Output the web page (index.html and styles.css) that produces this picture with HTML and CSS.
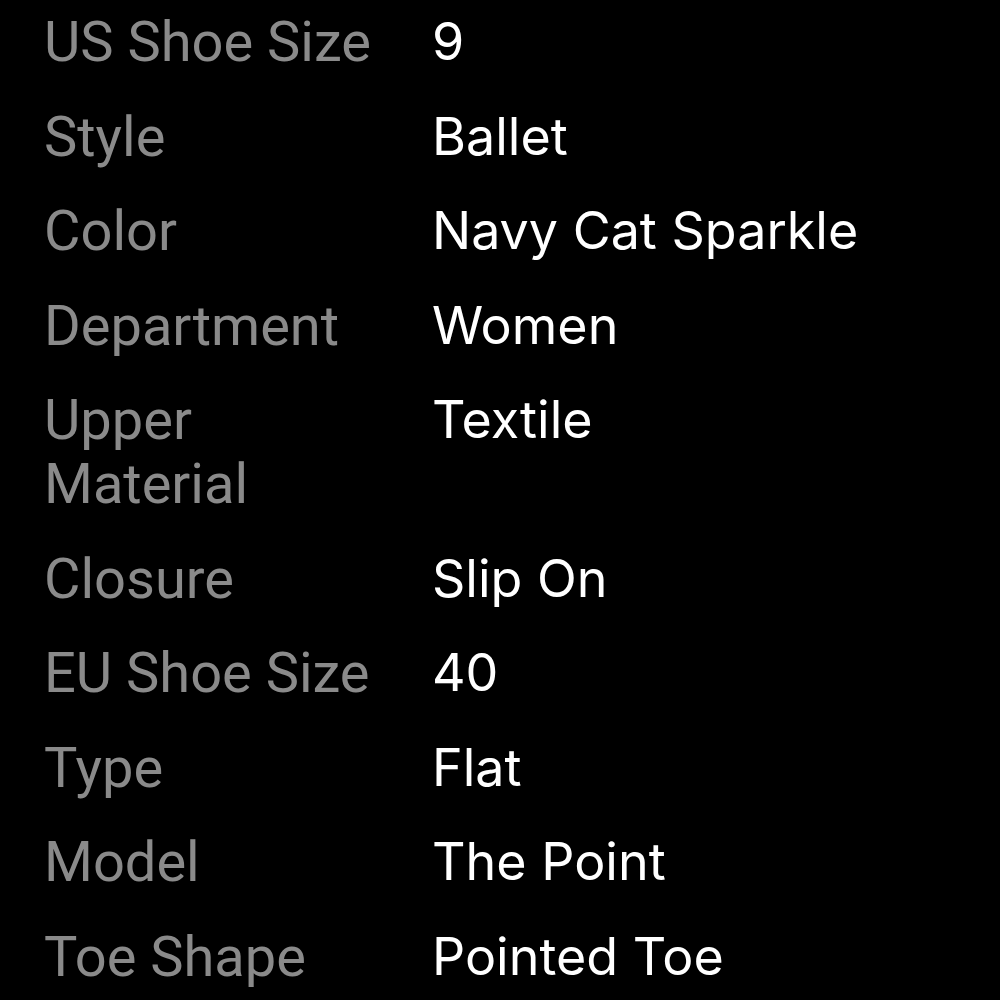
FILE: index.html
```html
<!DOCTYPE html>
<html lang="en">
<head>
    <meta charset="UTF-8">
    <title>Item specifics</title>
    <link rel="stylesheet" href="styles.css">
</head>
<body>
    <div class="specs">
        <div class="row"><div class="label">US Shoe Size</div><div class="value">9</div></div>
        <div class="row"><div class="label">Style</div><div class="value">Ballet</div></div>
        <div class="row"><div class="label">Color</div><div class="value">Navy Cat Sparkle</div></div>
        <div class="row"><div class="label">Department</div><div class="value">Women</div></div>
        <div class="row"><div class="label">Upper Material</div><div class="value">Textile</div></div>
        <div class="row"><div class="label">Closure</div><div class="value">Slip On</div></div>
        <div class="row"><div class="label">EU Shoe Size</div><div class="value">40</div></div>
        <div class="row"><div class="label">Type</div><div class="value">Flat</div></div>
        <div class="row"><div class="label">Model</div><div class="value">The Point</div></div>
        <div class="row"><div class="label">Toe Shape</div><div class="value">Pointed Toe</div></div>
    </div>
</body>
</html>
```

FILE: styles.css
```css
body {
    margin: 0;
    background: #000;
    font-family: Roboto, "Liberation Sans", sans-serif;
}
.specs {
    padding: 10px 40px 0 44px;
}
.row {
    display: grid;
    grid-template-columns: 388px 1fr;
    padding-bottom: 30.5px;
}
.label {
    color: #8a8a8a;
    font-size: 56px;
    line-height: 64px;
    width: 330px;
}
.value {
    color: #fff;
    font-family: Inter, sans-serif;
    font-size: 52px;
    line-height: 64px;
}
```
